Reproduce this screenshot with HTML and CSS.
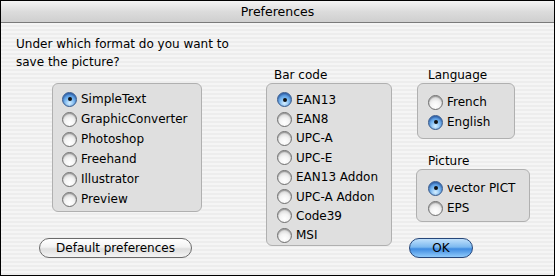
FILE: index.html
```html
<!DOCTYPE html>
<html lang="en">
<head>
    <meta charset="UTF-8">
    <title>Preferences</title>
    <link rel="stylesheet" href="styles.css">
</head>
<body>
    <div class="window">
        <div class="titlebar">Preferences</div>

        <div class="content">
            <div class="col col-left">
                <p class="prompt">Under which format do you want to<br>save the picture?</p>
                <div class="group group-format">
                    <label class="radio checked"><span class="dot"></span>SimpleText</label>
                    <label class="radio"><span class="dot"></span>GraphicConverter</label>
                    <label class="radio"><span class="dot"></span>Photoshop</label>
                    <label class="radio"><span class="dot"></span>Freehand</label>
                    <label class="radio"><span class="dot"></span>Illustrator</label>
                    <label class="radio"><span class="dot"></span>Preview</label>
                </div>
                <a href="#" class="btn btn-default">Default preferences</a>
            </div>

            <div class="col col-middle">
                <div class="group-title">Bar code</div>
                <div class="group group-barcode">
                    <label class="radio checked"><span class="dot"></span>EAN13</label>
                    <label class="radio"><span class="dot"></span>EAN8</label>
                    <label class="radio"><span class="dot"></span>UPC-A</label>
                    <label class="radio"><span class="dot"></span>UPC-E</label>
                    <label class="radio"><span class="dot"></span>EAN13 Addon</label>
                    <label class="radio"><span class="dot"></span>UPC-A Addon</label>
                    <label class="radio"><span class="dot"></span>Code39</label>
                    <label class="radio"><span class="dot"></span>MSI</label>
                </div>
            </div>

            <div class="col col-right">
                <div class="group-title">Language</div>
                <div class="group group-language">
                    <label class="radio"><span class="dot"></span>French</label>
                    <label class="radio checked"><span class="dot"></span>English</label>
                </div>
                <div class="group-title title-picture">Picture</div>
                <div class="group group-picture">
                    <label class="radio checked"><span class="dot"></span>vector PICT</label>
                    <label class="radio"><span class="dot"></span>EPS</label>
                </div>
                <a href="#" class="btn btn-ok">OK</a>
            </div>
        </div>
    </div>
</body>
</html>
```

FILE: styles.css
```css
        body {
            margin: 0;
            padding: 0;
            font-family: 'DejaVu Sans', Verdana, sans-serif;
            font-size: 12px;
            color: #000;
            background-color: #fff;
        }
        .window {
            width: 555px;
            height: 276px;
            box-sizing: border-box;
            border: 1px solid #000;
            background: repeating-linear-gradient(to bottom, #ededed 0px, #ededed 2px, #f5f5f5 2px, #f5f5f5 4px);
            overflow: hidden;
        }
        .titlebar {
            height: 21px;
            line-height: 21px;
            font-size: 12.5px;
            text-align: center;
            border-bottom: 1px solid #7a7a7a;
            background: linear-gradient(to bottom, #f4f4f4, #dcdcdc 50%, #cfcfcf);
        }
        .content {
            display: flex;
            align-items: flex-start;
            padding: 12px 0 0 15px;
        }
        .col {
            display: flex;
            flex-direction: column;
            align-items: flex-start;
        }
        .col-left {
            width: 250px;
        }
        .col-middle {
            width: 143px;
            margin-top: 32px;
        }
        .col-right {
            margin-top: 32px;
        }
        .prompt {
            margin: 0;
            line-height: 18px;
        }
        .group-title {
            line-height: 16px;
            padding-left: 8px;
        }
        .col-right .group-title {
            padding-left: 19px;
        }
        .title-picture {
            margin-top: 14px;
        }
        .group {
            box-sizing: border-box;
            border: 1px solid #b0b0b0;
            border-radius: 6px;
            background-color: #dfdfdf;
            display: flex;
            flex-direction: column;
        }
        .group-format {
            margin: 12px 0 0 36px;
            width: 150px;
            height: 129px;
            padding: 5px 0 0 9px;
        }
        .group-barcode {
            width: 126px;
            height: 163px;
            padding: 6px 0 0 10px;
        }
        .group-language {
            margin-left: 8px;
            width: 98px;
            height: 56px;
            padding: 8px 0 0 10px;
        }
        .group-picture {
            margin-left: 7px;
            width: 114px;
            height: 53px;
            padding: 8px 0 0 11px;
        }
        .radio {
            display: flex;
            align-items: center;
            height: 20px;
            white-space: nowrap;
        }
        .dot {
            width: 15px;
            height: 15px;
            box-sizing: border-box;
            border: 1px solid #6f6f6f;
            border-radius: 50%;
            margin-right: 4px;
            background: radial-gradient(circle at 50% 75%, #ffffff 0%, #f4f4f4 40%, #c4c4c4 100%);
            box-shadow: inset 0 1px 1px rgba(0, 0, 0, 0.3);
            position: relative;
        }
        .checked .dot {
            border-color: #34578a;
            background: radial-gradient(circle at 50% 78%, #d6efff 0%, #74b4f0 45%, #2f73c8 100%);
            box-shadow: inset 0 1px 2px rgba(0, 0, 60, 0.4);
        }
        .checked .dot::after {
            content: '';
            position: absolute;
            left: 4.5px;
            top: 4.5px;
            width: 4px;
            height: 4px;
            border-radius: 50%;
            background-color: #111;
        }
        .btn {
            display: block;
            box-sizing: border-box;
            height: 20px;
            line-height: 18px;
            text-align: center;
            color: #000;
            text-decoration: none;
            border: 1px solid #6b6b6b;
            border-radius: 10px;
        }
        .btn-default {
            margin: 26px 0 0 23px;
            width: 153px;
            background: linear-gradient(to bottom, #ffffff, #f2f2f2 45%, #dedede 55%, #f4f4f4);
        }
        .btn-ok {
            margin-top: 16px;
            width: 64px;
            border-color: #27477a;
            background: linear-gradient(to bottom, #bfe0fb, #7cb9f0 45%, #3f8be0 55%, #8fcafb);
        }
```
